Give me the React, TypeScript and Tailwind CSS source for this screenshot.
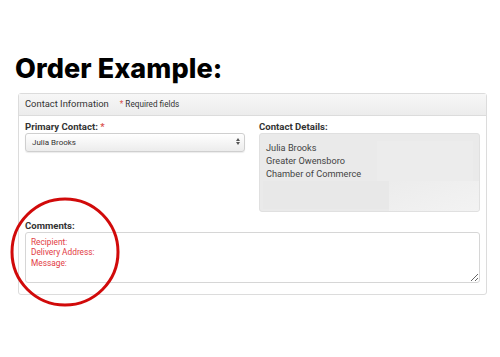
import { useState } from "react";

const OrderExample = () => {
  const [contact, setContact] = useState("Julia Brooks");

  return (
    <div className="relative w-[500px] h-[357px] bg-white font-['Roboto',sans-serif] overflow-hidden">
      <h1 className="pt-[52px] pl-[15px] text-[27px] leading-[33px] font-extrabold text-black font-['Inter',sans-serif] tracking-[0.1px]">
        Order Example:
      </h1>

      <div className="mt-[8px] ml-[18px] w-[469px] border border-[#dcdcdc] rounded-[3px]">
        <div className="h-[22px] flex items-center px-[6px] gap-[11px] bg-gradient-to-b from-[#f7f7f7] to-[#ececec] border-b border-[#dcdcdc]">
          <span className="text-[9.4px] text-[#333]">Contact Information</span>
          <span className="text-[8.2px] text-[#333]">
            <span className="text-[#d9534f]">*</span> Required fields
          </span>
        </div>

        <div className="px-[6px] pt-[5px] pb-[11px]">
          <div className="flex gap-[14px]">
            <div className="w-[220px]">
              <div className="text-[9.6px] font-bold text-[#333] leading-[12px]">
                Primary Contact: <span className="text-[#d9534f]">*</span>
              </div>
              <div className="relative">
                <select
                  value={contact}
                  onChange={(e) => setContact(e.target.value)}
                  className="block appearance-none w-full h-[19px] pl-[6px] text-[8px] text-[#333] bg-gradient-to-b from-white to-[#ececec] border border-[#cfcfcf] rounded-[3px] shadow-[0_1px_1px_rgba(0,0,0,0.08)]"
                >
                  <option>Julia Brooks</option>
                </select>
                <span className="absolute right-[5px] top-[5px] flex flex-col items-center pointer-events-none">
                  <svg width="4" height="3" viewBox="0 0 4 3"><path d="M0 3 L2 0 L4 3 Z" fill="#555" /></svg>
                  <svg width="4" height="3" viewBox="0 0 4 3" className="mt-[1px]"><path d="M0 0 L2 3 L4 0 Z" fill="#555" /></svg>
                </span>
              </div>
            </div>

            <div className="w-[221px]">
              <div className="text-[9.6px] font-bold text-[#333] leading-[12px]">Contact Details:</div>
              <div className="relative h-[79px] bg-[#eaeaea] border border-[#e0e0e0] rounded-[3px] px-[6px] pt-[7px] overflow-hidden">
                <div className="absolute left-[117px] top-[7px] w-[96px] h-[40px] bg-[#ececec]" />
                <div className="absolute left-[3px] top-[47px] w-[126px] h-[28px] bg-[#e8e8e8]" />
                <div className="absolute left-[129px] top-[47px] w-[92px] h-[32px] bg-gradient-to-br from-[#ececec] to-[#f3f3f3]" />
                <div className="relative text-[9.2px] leading-[13px] text-[#444]">
                  <div>Julia Brooks</div>
                  <div>Greater Owensboro</div>
                  <div>Chamber of Commerce</div>
                </div>
              </div>
            </div>
          </div>

          <div className="mt-[8px] text-[9.6px] font-bold text-[#333] leading-[12px]">Comments:</div>
          <textarea
            readOnly
            className="block w-[455px] h-[51px] px-[5px] pt-[4px] text-[8.3px] leading-[10.3px] text-[#e23b44] border border-[#d6d6d6] rounded-[3px] outline-none resize-y"
            value={"Recipient:\nDelivery Address:\nMessage:"}
          />
        </div>
      </div>

      {/* red highlight ring */}
      <svg className="absolute left-0 top-0 pointer-events-none" width="500" height="357">
        <circle cx="65" cy="252" r="53" fill="none" stroke="#d10a0a" strokeWidth="3" />
      </svg>
    </div>
  );
};

export default OrderExample;
